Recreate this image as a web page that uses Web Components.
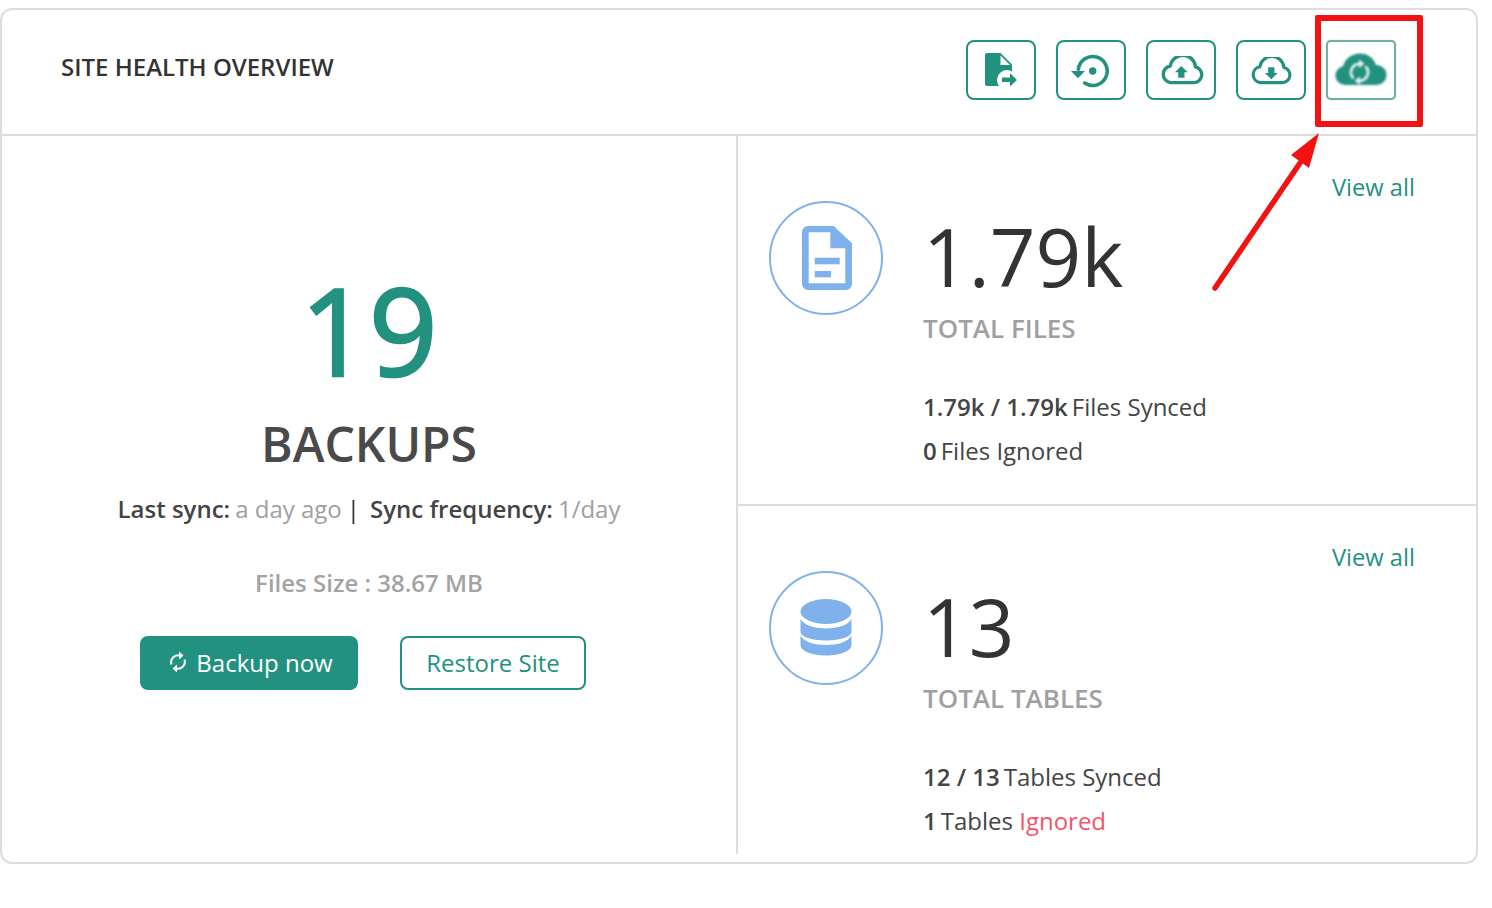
<!DOCTYPE html>
<html>
<head>
<meta charset="utf-8">
<style>
  html,body{margin:0;background:#fff;}
  body{padding-top:8px;font-family:"Open Sans",sans-serif;color:#333;height:900px;box-sizing:border-box;overflow:hidden;}
</style>
</head>
<body>
<health-card></health-card>

<script>
const CLOUD = "M9.5 26.6H33A8 8 0 0 0 34.5 10.8 12.7 12.7 0 0 0 9.3 10 8.4 8.4 0 0 0 9.5 26.6Z";
const ICONS = {
  fileOut:`<svg width="32" height="34" viewBox="0 0 32 34"><path fill="#23917f" d="M2 0H15.500L27 11.500V33H2a2 2 0 0 1-2-2V2a2 2 0 0 1 2-2z"/><path fill="#fff" d="M15.500 2.500 25 12H15.500z"/><circle cx="22" cy="27" r="10" fill="#fff"/><path fill="#23917f" d="M17 24.500h8v-4.500l7 7-7 6.500v-4.500h-8z"/></svg>`,
  restore:`<svg width="38" height="36" viewBox="0 0 38 36" style="overflow:visible"><path fill="none" stroke="#23917f" stroke-width="3.600" stroke-linecap="round" d="M6.300 17.300A14.500 14.500 0 1 1 12.700 31.100"/><path fill="#23917f" d="M-1 19H13L6 26.300z"/><circle cx="20.700" cy="19" r="3.700" fill="#23917f"/></svg>`,
  cloudUp:`<svg width="44" height="30" viewBox="0 0 44 30" style="margin:2px 0 0 3px"><path fill="none" stroke="#23917f" stroke-width="3.300" stroke-linejoin="round" d="${CLOUD}"/><path fill="#23917f" d="M20.300 10l6.400 6.200h-3.200v5.500h-6.300v-5.500h-3.300z"/></svg>`,
  cloudDown:`<svg width="42" height="29" viewBox="0 0 44 30" style="margin:2px 0 0 1px"><path fill="none" stroke="#23917f" stroke-width="3.300" stroke-linejoin="round" d="${CLOUD}"/><path fill="#23917f" d="M18 10.500h6.500v6h3.500l-6.700 6.500-6.800-6.500H18z"/></svg>`,
  cloudSync:`<svg width="54" height="36" viewBox="0 0 54 36" style="filter:blur(1.200px)"><path fill="#23917f" d="M11 33a9.500 9.500 0 0 1-2-18.800C11 6.500 18 1.500 26 1.500c7.500 0 14 4.500 16 11.500a10 10 0 0 1 1 20z"/><path fill="none" stroke="#e8f3f1" stroke-width="2.700" d="M25.500 11.800A8.500 8.500 0 0 0 19.500 26.300M25.500 28.800A8.500 8.500 0 0 0 31.500 14.300"/><path fill="#e8f3f1" d="M25 7.500v8.500l5.500-4.300zM26 33v-8.500l-5.500 4.300z"/></svg>`,
  file:`<svg width="50" height="64" viewBox="0 0 50 64" style="margin-left:1px"><path fill="#7fb1ec" d="M6 0h25.700L50 17.300V58a6 6 0 0 1-6 6H6a6 6 0 0 1-6-6V6a6 6 0 0 1 6-6zm.7 6.300v51h36.600V22.300H28.300v-16z"/><rect x="12.700" y="31.700" width="25" height="6.600" fill="#7fb1ec"/><rect x="12.700" y="45" width="16.300" height="6.300" fill="#7fb1ec"/></svg>`,
  db:`<svg width="52" height="58" viewBox="0 0 52 58"><ellipse cx="26" cy="12.500" rx="25.500" ry="12.500" fill="#7fb1ec"/><path fill="#7fb1ec" d="M.5 20C4 26 14 29.500 26 29.500S48 26 51.500 20v12.500C51.500 38 40 41.500 26 41.500S.5 38 .5 32.500z"/><path fill="#7fb1ec" d="M.5 36.500C4 43 14 46 26 46s22-3 25.500-9.500V46c0 6-11.500 10.500-25.500 10.500S.5 52 .5 46z"/></svg>`,
  sync:`<svg width="18" height="22" viewBox="0 0 18 22"><path fill="none" stroke="#fff" stroke-width="2" d="M2.500 13.500A7 7 0 0 1 11 4.600M15.500 8.500A7 7 0 0 1 7 17.400"/><path fill="#fff" d="M10 .5l4.500 4L10 8.500zM8 13.500v8L3.500 17.500z"/></svg>`
};

class ToolButton extends HTMLElement{
  constructor(){
    super();
    this._shadowRoot = this.attachShadow({mode:"open"});
    const soft = this.hasAttribute("soft");
    this._shadowRoot.innerHTML = `
      <style>
        :host{display:block;}
        .tool{
          width:70px;height:60px;box-sizing:border-box;
          border:2px solid ${soft ? "#6fb0a4" : "#23917f"};
          border-radius:8px;background:#fff;
          display:flex;align-items:center;justify-content:center;
          ${soft ? "border-radius:5px;box-shadow:0 0 1px #6fb0a4;" : ""}
        }
      </style>
      <div class="tool">${ICONS[this.getAttribute("icon")]}</div>
    `;
  }
}
customElements.define("tool-button", ToolButton);

class BackupPanel extends HTMLElement{
  constructor(){
    super();
    this._shadowRoot = this.attachShadow({mode:"open"});
    this._shadowRoot.innerHTML = `
      <style>
        :host{display:block;text-align:center;font-family:"Open Sans",sans-serif;}
        .count{font-size:120px;line-height:120px;-webkit-text-stroke:2.5px #23917f;color:#23917f;padding-top:134px;}
        h2{font-size:48px;line-height:60px;font-weight:600;color:#4a4a4a;margin:24px 0 0;}
        .sync{
          display:flex;justify-content:center;align-items:baseline;
          font-size:24px;line-height:32px;color:#a0a0a0;margin-top:19px;white-space:nowrap;
        }
        .sync b{font-weight:600;color:#444;margin-right:5px;}
        .sync i{font-style:normal;color:#333;margin:0 10px 0 5px;}
        .size{font-size:24px;line-height:32px;color:#a3a3a3;margin-top:42px;font-weight:600;}
        .actions{display:flex;justify-content:flex-start;gap:42px;margin:37px 0 0 138px;}
        .btn{
          height:54px;box-sizing:border-box;border-radius:8px;font-size:24px;
          display:flex;align-items:center;justify-content:center;
          border:2px solid #23917f;padding-bottom:2px;
        }
        .primary{width:218px;background:#23917f;color:#fff;gap:9px;padding-left:4px;}
        .ghost{width:186px;background:#fff;color:#23917f;}
      </style>
      <div class="count">19</div>
      <h2>BACKUPS</h2>
      <div class="sync"><b>Last sync:</b><span>a day ago</span><i>|</i><b>Sync frequency:</b><span>1/day</span></div>
      <div class="size">Files Size : 38.67 MB</div>
      <div class="actions">
        <div class="btn primary">${ICONS.sync}<span>Backup now</span></div>
        <div class="btn ghost">Restore Site</div>
      </div>
    `;
  }
}
customElements.define("backup-panel", BackupPanel);

class StatBlock extends HTMLElement{
  constructor(){
    super();
    this._shadowRoot = this.attachShadow({mode:"open"});
    this._shadowRoot.innerHTML = `
      <style>
        :host{display:block;position:relative;box-sizing:border-box;font-family:"Open Sans",sans-serif;}
        .wrap{display:flex;align-items:flex-start;padding:65px 0 0 31px;}
        .circle{
          width:114px;height:114px;box-sizing:border-box;flex:none;
          border:2px solid #7fb1ec;border-radius:50%;
          display:flex;align-items:center;justify-content:center;
        }
        .info{margin-left:40px;}
        .value{font-size:80px;line-height:110px;color:#333;}
        .label{font-size:26px;line-height:36px;font-weight:600;color:#a0a0a0;margin-top:-1px;}
        .lines{margin-top:39px;font-size:24px;line-height:44px;color:#444;white-space:nowrap;}
        ::slotted(div){display:block;}
        .view{position:absolute;top:34px;right:61px;font-size:23.700px;line-height:34px;color:#23917f;}
      </style>
      <div class="view">View all</div>
      <div class="wrap">
        <div class="circle">${ICONS[this.getAttribute("icon")]}</div>
        <div class="info">
          <div class="value">${this.getAttribute("value")}</div>
          <div class="label">${this.getAttribute("label")}</div>
          <div class="lines"><slot></slot></div>
        </div>
      </div>
    `;
  }
}
customElements.define("stat-block", StatBlock);

class HealthCard extends HTMLElement{
  constructor(){
    super();
    this._shadowRoot = this.attachShadow({mode:"open"});
    this._shadowRoot.innerHTML = `
      <style>
        :host{display:block;width:1478px;font-family:"Open Sans",sans-serif;}
        .card{height:856px;box-sizing:border-box;border:2px solid #ddd;border-radius:12px;background:#fff;}
        header{
          height:126px;box-sizing:border-box;border-bottom:2px solid #ddd;
          display:flex;align-items:flex-start;justify-content:space-between;
          padding:30px 80px 0 59px;
        }
        h1{font-size:24px;line-height:54px;font-weight:600;color:#333;margin:0;}
        .tools{display:flex;gap:20px;}
        .body{display:grid;grid-template-columns:734px 2px 1fr;height:718px;}
        .rule{background:#ddd;}
        .right{display:grid;grid-template-rows:368px 2px 1fr;}
        .hr{background:#ddd;}
        .mark{
          position:absolute;left:1315px;top:15px;width:108px;height:112px;box-sizing:border-box;
          border:6px solid #f21212;border-radius:2px;
        }
        svg.arrow{position:absolute;left:1205px;top:125px;}
        b{font-weight:600;margin-right:4px;}
        em{font-style:normal;color:#f5536b;}
      </style>
      <div class="card">
        <header>
          <h1>SITE HEALTH OVERVIEW</h1>
          <div class="tools">
            <tool-button icon="fileOut"></tool-button>
            <tool-button icon="restore"></tool-button>
            <tool-button icon="cloudUp"></tool-button>
            <tool-button icon="cloudDown"></tool-button>
            <tool-button icon="cloudSync" soft></tool-button>
          </div>
        </header>
        <div class="body">
          <backup-panel></backup-panel>
          <div class="rule"></div>
          <div class="right">
            <stat-block icon="file" value="1.79k" label="TOTAL FILES">
              <div><b>1.79k / 1.79k</b>Files Synced</div>
              <div><b>0</b>Files Ignored</div>
            </stat-block>
            <div class="hr"></div>
            <stat-block icon="db" value="13" label="TOTAL TABLES">
              <div><b>12 / 13</b>Tables Synced</div>
              <div><b>1</b>Tables <em>Ignored</em></div>
            </stat-block>
          </div>
        </div>
      </div>
      <div class="mark"></div>
      <svg class="arrow" width="125" height="170" viewBox="0 0 125 170">
        <path fill="none" stroke="#f21212" stroke-width="5.500" stroke-linecap="round" d="M10 163 95 38"/>
        <path fill="#f21212" d="M114 8 104 43 86 30z"/>
      </svg>
    `;
  }
}
customElements.define("health-card", HealthCard);
</script>
</body>
</html>
